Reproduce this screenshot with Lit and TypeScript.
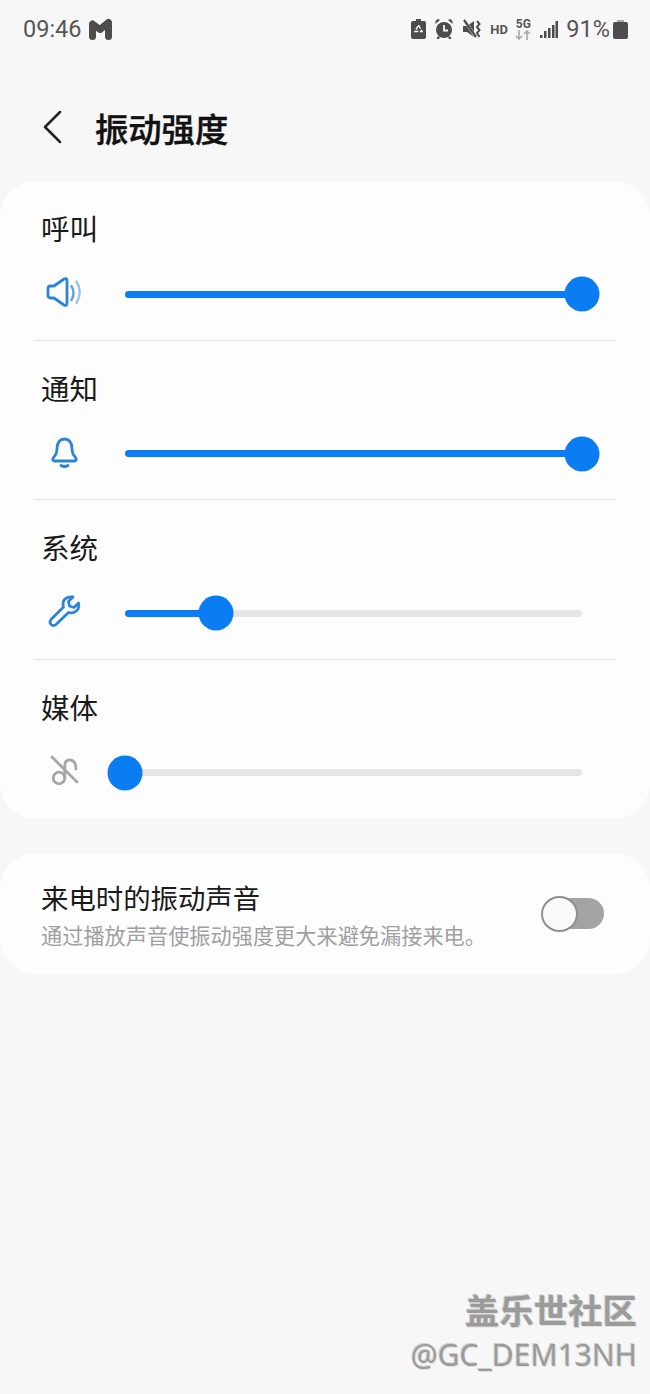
import { LitElement, html, css, svg } from "lit";
import { customElement } from "lit/decorators.js";

interface Channel {
  label: string;
  value: number;
  icon: unknown;
}

const speakerIcon = svg`
  <g fill="none" stroke-linecap="round" stroke-linejoin="round">
    <path d="M2 13.500Q2 11 4.500 11H8L18 4Q21 2.500 21 6V28Q21 31.500 18 30L8 23H4.500Q2 23 2 20.500Z" stroke="#2b84d8" stroke-width="2.800"/>
    <path d="M25.500 11Q29.500 18 25.500 25" stroke="#5c9fdc" stroke-width="2.400"/>
    <path d="M30.500 6.500Q37 17 30.500 28" stroke="#9cc3e6" stroke-width="2.400"/>
  </g>`;

const bellIcon = svg`
  <g fill="none" stroke="#2b84d8" stroke-width="2.800" stroke-linecap="round" stroke-linejoin="round">
    <path d="M8.500 26Q5.500 25.500 7.500 22.500Q11 19 11 13.500Q11.500 4 18.500 4Q25.500 4 26 13.500Q26 19 29.500 22.500Q31.500 25.500 28.500 26Z"/>
    <path d="M15 30.500Q18.500 32.500 22 30.500"/>
  </g>`;

const wrenchIcon = svg`
  <path d="M5 25.500L17.500 13Q15.500 7 20.500 4Q23.500 2.500 27 3L22.500 7.500L23.500 12L28 13.500L32.500 9Q33.500 12 32 15Q28.500 20 22.500 18.500L10 30.500Q7.500 32.500 5 30.500Q3 28 5 25.500Z"
    fill="none" stroke="#2b84d8" stroke-width="2.800" stroke-linejoin="round"/>`;

const noteOffIcon = svg`
  <g fill="none" stroke="#a6a6a6" stroke-width="2.800" stroke-linecap="round">
    <circle cx="13" cy="24" r="5.800"/>
    <path d="M18.800 24V11.500Q19 5.500 24.500 6Q30 7 30 15"/>
    <path d="M6 3L31 28"/>
  </g>`;

const channels: Channel[] = [
  { label: "呼叫", value: 100, icon: speakerIcon },
  { label: "通知", value: 100, icon: bellIcon },
  { label: "系统", value: 20, icon: wrenchIcon },
  { label: "媒体", value: 0, icon: noteOffIcon },
];

@customElement("app-root")
export class AppRoot extends LitElement {
  static override styles = css`
    :host {
      display: block;
      position: relative;
      height: 1394px;
      overflow: hidden;
      background: #f7f7f7;
      font-family: "Noto Sans CJK SC", "Liberation Sans", sans-serif;
      color: #1a1a1a;
    }

    .status {
      display: flex;
      align-items: center;
      height: 58px;
      padding: 0 22px 0 23px;
      color: #555;
      font-family: Roboto, sans-serif;
    }

    .time {
      font-size: 23.500px;
      margin-right: 7px;
    }

    .status-right {
      display: flex;
      align-items: center;
      gap: 9px;
      margin-left: auto;
    }

    .status svg {
      display: block;
      fill: #4d4d4d;
    }

    .hd {
      width: 18px;
      margin-right: -2px;
      font-size: 13px;
      font-weight: 700;
    }

    .net {
      display: flex;
      flex-direction: column;
      align-items: center;
      width: 16px;
      font-size: 12px;
      font-weight: 700;
      line-height: 12px;
    }

    .pct {
      font-size: 23.500px;
      margin-left: -1px;
    }

    .mute {
      margin-left: 1px;
    }

    .batt {
      margin-left: -6px;
    }

    .header {
      display: flex;
      align-items: center;
      height: 56px;
      padding: 41px 0 26px 42px;
    }

    .header svg {
      display: block;
      margin-right: 32px;
    }

    h1 {
      margin: 0;
      font-size: 33.300px;
      font-weight: 500;
      color: #111;
      -webkit-text-stroke: 0.4px #111;
    }

    .card {
      background: #fdfdfd;
      border-radius: 36px;
    }

    .row {
      box-sizing: border-box;
      height: 159.5px;
      padding-top: 27px;
      position: relative;
    }

    .row + .row::before {
      content: "";
      position: absolute;
      top: -1px;
      left: 34px;
      right: 34px;
      height: 1px;
      background: #e6e6e6;
    }

    .label {
      padding-left: 41px;
      font-size: 28.500px;
      line-height: 40px;
    }

    .control {
      display: flex;
      align-items: center;
      gap: 43px;
      height: 40px;
      margin-top: 26px;
      padding: 0 68px 0 46px;
    }

    .control svg {
      display: block;
      flex: none;
      margin-top: -2px;
    }

    .track {
      position: relative;
      flex: 1;
      height: 7px;
      border-radius: 4px;
      background: #e6e6e6;
    }

    .fill {
      height: 100%;
      border-radius: 4px;
      background: #0a7df2;
    }

    .thumb {
      position: absolute;
      top: 50%;
      width: 35px;
      height: 35px;
      border-radius: 50%;
      background: #0a7df2;
      transform: translate(-50%, -50%);
    }

    .sound {
      display: flex;
      align-items: center;
      justify-content: space-between;
      height: 121px;
      margin-top: 34px;
      padding: 0 46px 0 41px;
    }

    .sound-title {
      font-size: 27.400px;
      line-height: 40px;
    }

    .sound-sub {
      margin-top: 3px;
      font-size: 21.200px;
      line-height: 30px;
      color: #a0a0a0;
    }

    .toggle {
      position: relative;
      flex: none;
      width: 63px;
      height: 36px;
    }

    .toggle-track {
      position: absolute;
      top: 2px;
      left: 14px;
      right: 0;
      bottom: 3px;
      border-radius: 16px;
      background: #a3a3a3;
    }

    .toggle-thumb {
      position: absolute;
      top: 0;
      left: 0;
      box-sizing: border-box;
      width: 37px;
      height: 36px;
      border: 2px solid #8f8f8f;
      border-radius: 50%;
      background: #fafafa;
    }

    .mark {
      position: absolute;
      right: 13px;
      top: 1285px;
      text-align: right;
      color: #9b9b9b;
      text-shadow: 1px 1px 0 #e2e2e2, -1px -1px 0 #cfcfcf;
    }

    .mark-cn {
      font-size: 34.400px;
      font-weight: 700;
      line-height: 48px;
    }

    .mark-id {
      font-family: "Noto Sans", sans-serif;
      font-size: 30px;
      line-height: 44px;
    }
  `;

  private renderStatus() {
    return html`
      <div class="status">
        <span class="time">09:46</span>
        <svg width="23" height="21" viewBox="0 0 23 21">
          <path d="M3.500 6V17.500M3.500 5L11 10.500L19.500 3.500V17.500" fill="none" stroke="#4d4d4d" stroke-width="7" stroke-linecap="round" stroke-linejoin="round"/>
        </svg>
        <div class="status-right">
          <svg width="15" height="20" viewBox="0 0 15 20">
            <path d="M5 0H10V2H13Q15 2 15 4V18Q15 20 13 20H2Q0 20 0 18V4Q0 2 2 2H5Z"/>
            <path d="M7.500 6L11 12.500H4Z" fill="none" stroke="#f7f7f7" stroke-width="1.500" stroke-dasharray="4 1.500"/>
          </svg>
          <svg width="18" height="20" viewBox="0 0 18 20">
            <circle cx="9" cy="11" r="8"/>
            <path d="M0.500 5L5 1L3 0Q0 1 0.500 5ZM17.500 5L13 1L15 0Q18 1 17.500 5ZM3 17L1.500 20H4L5 18ZM15 17L16.500 20H14L13 18Z"/>
            <path d="M9 6V11.500H13" fill="none" stroke="#f7f7f7" stroke-width="1.800"/>
          </svg>
          <svg class="mute" width="18" height="20" viewBox="0 0 18 20">
            <path d="M0 7H4L11 2V18L4 13H0Z"/>
            <path d="M2 2L12 17" stroke="#f7f7f7" stroke-width="3"/>
            <path d="M1 1L13 18" stroke="#4d4d4d" stroke-width="2.200"/>
            <path d="M14 2L16.500 5L14 8L16.500 11L14 14L16.500 18" fill="none" stroke="#4d4d4d" stroke-width="2"/>
          </svg>
          <span class="hd">HD</span>
          <div class="net">
            <span>5G</span>
            <svg width="16" height="10" viewBox="0 0 16 10" style="fill:none">
              <path d="M4 0V9M1 6L4 9L7 6" stroke="#a8a8a8" stroke-width="1.600"/>
              <path d="M12 10V1M9 4L12 1L15 4" stroke="#a8a8a8" stroke-width="1.600"/>
            </svg>
          </div>
          <svg width="18" height="18" viewBox="0 0 18 18">
            <rect x="0" y="15" width="2.500" height="3"/>
            <rect x="4" y="11" width="2.500" height="7"/>
            <rect x="8" y="8" width="2.500" height="10"/>
            <rect x="12" y="5" width="2.500" height="13"/>
            <rect x="15.500" y="1" width="2.500" height="17"/>
          </svg>
          <span class="pct">91%</span>
          <svg class="batt" width="15" height="19" viewBox="0 0 15 19">
            <rect x="4" y="0" width="7" height="2" fill="#a8a8a8"/>
            <rect x="0" y="2" width="15" height="17" rx="2"/>
          </svg>
        </div>
      </div>
    `;
  }

  private renderRow(c: Channel) {
    return html`
      <div class="row">
        <div class="label">${c.label}</div>
        <div class="control">
          <svg width="36" height="36" viewBox="0 0 36 36">${c.icon}</svg>
          <div class="track">
            <div class="fill" style="width:${c.value}%"></div>
            <div class="thumb" style="left:${c.value}%"></div>
          </div>
        </div>
      </div>
    `;
  }

  override render() {
    return html`
      ${this.renderStatus()}
      <div class="header">
        <svg width="21" height="34" viewBox="0 0 21 34" fill="none">
          <path d="M18 2L3 17L18 32" stroke="#222" stroke-width="2.500" stroke-linecap="round" stroke-linejoin="round"/>
        </svg>
        <h1>振动强度</h1>
      </div>
      <div class="card">${channels.map((c) => this.renderRow(c))}</div>
      <div class="card sound">
        <div>
          <div class="sound-title">来电时的振动声音</div>
          <div class="sound-sub">通过播放声音使振动强度更大来避免漏接来电。</div>
        </div>
        <div class="toggle">
          <div class="toggle-track"></div>
          <div class="toggle-thumb"></div>
        </div>
      </div>
      <div class="mark">
        <div class="mark-cn">盖乐世社区</div>
        <div class="mark-id">@GC_DEM13NH</div>
      </div>
    `;
  }
}

declare global {
  interface HTMLElementTagNameMap {
    "app-root": AppRoot;
  }
}
